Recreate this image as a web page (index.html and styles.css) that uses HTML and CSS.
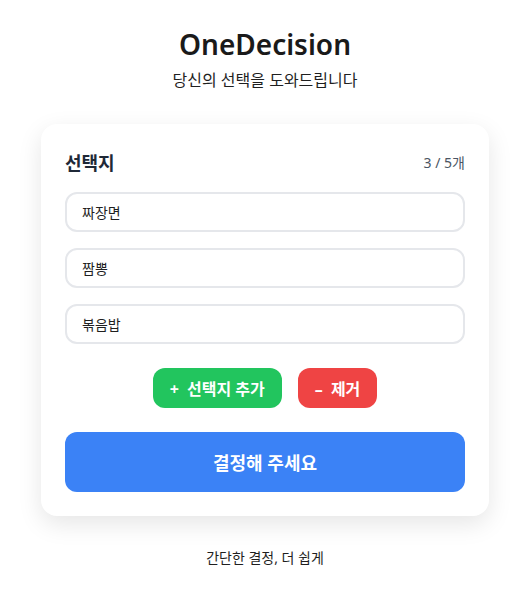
FILE: index.html
```html
<!DOCTYPE html>
<html lang="ko">

<head>
    <meta charset="UTF-8">
    <meta name="viewport" content="width=device-width, initial-scale=1.0">
    <title>OneDecision</title>
    <link rel="stylesheet" href="styles.css">
</head>

<body>

    <div class="container">
        <header class="page-header">
            <h1>OneDecision</h1>
            <p>당신의 선택을 도와드립니다</p>
        </header>

        <div class="card">
            <div class="card-header">
                <h2>선택지</h2>
                <span class="count">3 / 5개</span>
            </div>

            <div class="options">
                <input type="text" class="option-input" value="짜장면">
                <input type="text" class="option-input" value="짬뽕">
                <input type="text" class="option-input" value="볶음밥">
            </div>

            <div class="option-actions">
                <button class="btn btn-add"><span class="sign">+</span> 선택지 추가</button>
                <button class="btn btn-remove"><span class="sign">–</span> 제거</button>
            </div>

            <button class="btn-decide">결정해 주세요</button>
        </div>

        <footer class="page-footer">간단한 결정, 더 쉽게</footer>
    </div>

</body>

</html>
```

FILE: styles.css
```css
body {
    font-family: 'Noto Sans', 'Noto Sans CJK KR', sans-serif;
    margin: 0;
    padding: 0 0 0 5px;
    background-color: #ffffff;
    color: #1f1f1f;
}

.container {
    width: 448px;
    margin: 0 auto;
}

.page-header {
    text-align: center;
    padding-top: 26px;
}

.page-header h1 {
    margin: 0;
    font-size: 28px;
    font-weight: 600;
    line-height: 36px;
    color: #1a1a1a;
}

.page-header p {
    margin: 0;
    margin-top: 7px;
    font-size: 16px;
    line-height: 22px;
}

.card {
    margin-top: 33px;
    background-color: #fff;
    border-radius: 16px;
    padding: 24px;
    box-shadow: 0 8px 24px rgba(0, 0, 0, 0.1);
}

.card-header {
    display: flex;
    justify-content: space-between;
    align-items: center;
    height: 28px;
    margin-bottom: 16px;
}

.card-header h2 {
    margin: 0;
    font-size: 18px;
    font-weight: 700;
    color: #1f2937;
}

.count {
    font-size: 14px;
    color: #4b5563;
}

.options {
    display: flex;
    flex-direction: column;
    gap: 16px;
}

.option-input {
    box-sizing: border-box;
    width: 100%;
    height: 40px;
    padding: 0 15px;
    border: 2px solid #e5e7eb;
    border-radius: 12px;
    font-family: inherit;
    font-size: 14px;
    color: #1f1f1f;
    outline: none;
}

.option-actions {
    display: flex;
    justify-content: center;
    gap: 16px;
    margin-top: 24px;
}

.btn {
    height: 40px;
    padding: 0 17px;
    border: none;
    border-radius: 12px;
    font-family: inherit;
    font-size: 16px;
    font-weight: 700;
    color: white;
    cursor: pointer;
}

.btn .sign {
    margin-right: 4px;
}

.btn-add {
    background-color: #22c55e;
}

.btn-remove {
    background-color: #ef4444;
}

.btn-decide {
    display: block;
    width: 100%;
    height: 60px;
    margin-top: 24px;
    border: none;
    border-radius: 12px;
    background-color: #3b82f6;
    font-family: inherit;
    font-size: 18px;
    font-weight: 700;
    color: white;
    cursor: pointer;
}

.page-footer {
    margin-top: 32px;
    text-align: center;
    font-size: 14px;
    line-height: 20px;
}
```
